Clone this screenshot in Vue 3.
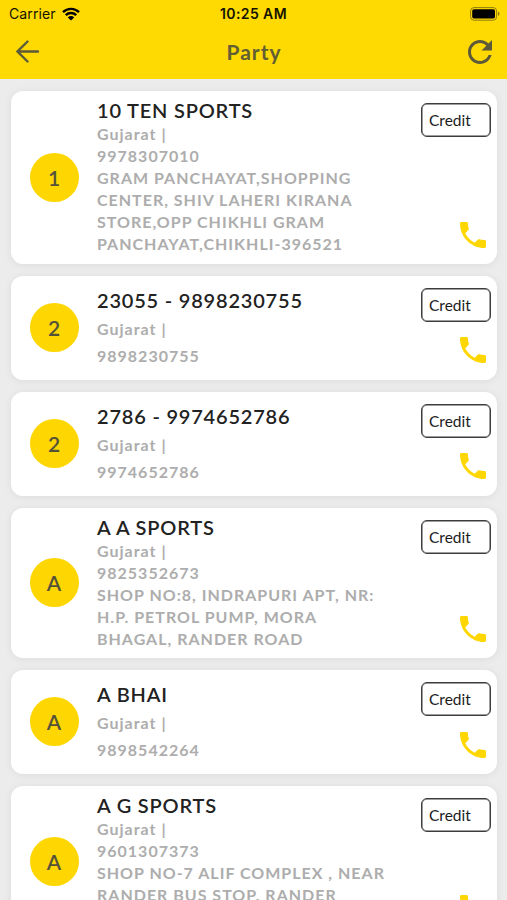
<template>
  <div class="screen">
    <header class="header">
      <div class="status-bar">
        <div class="carrier">
          <span>Carrier</span>
          <svg class="wifi" viewBox="0 0 18 14">
            <path d="M1 5.1a11.6 11.6 0 0 1 16 0" />
            <path d="M3.8 8.1a7.5 7.5 0 0 1 10.4 0" />
            <path class="wifi-dot" d="M9 13.6 5.8 10.4a4.6 4.6 0 0 1 6.4 0z" />
          </svg>
        </div>
        <div class="clock">10:25 AM</div>
        <svg class="battery" viewBox="0 0 30 14">
          <rect x="0.6" y="0.6" width="26" height="12.6" rx="3.4" fill="none" stroke="#8f7c10" stroke-width="1" />
          <rect x="2.2" y="2.2" width="22.8" height="9.4" rx="1.8" fill="#000" />
          <path d="M28 4.8c2 .7 2 3.5 0 4.2z" fill="#8f7c10" />
        </svg>
      </div>

      <div class="toolbar">
        <svg class="back" viewBox="0 0 24 24">
          <path d="M22 11.5H1.5M11.5 1.5l-10 10 10 10" />
        </svg>
        <h1>Party</h1>
        <svg class="refresh" viewBox="4 4 16 16">
          <path d="M17.65 6.35C16.2 4.9 14.21 4 12 4c-4.42 0-7.99 3.58-7.99 8s3.57 8 7.99 8c3.73 0 6.84-2.55 7.73-6h-2.08c-.82 2.33-3.04 4-5.65 4-3.31 0-6-2.69-6-6s2.69-6 6-6c1.66 0 3.14.69 4.22 1.78L13 11h7V4l-2.35 2.35z" />
        </svg>
      </div>
    </header>

    <main class="party-list">
      <article
        v-for="party in parties"
        :key="party.phone"
        class="card"
        :class="{ 'card-short': !party.address }"
      >
        <div class="avatar">{{ party.name.charAt(0) }}</div>

        <div class="info">
          <h2>{{ party.name }}</h2>
          <p>{{ party.state }} |</p>
          <p>{{ party.phone }}</p>
          <p v-for="line in party.address" :key="line">{{ line }}</p>
        </div>

        <div class="actions">
          <button class="credit">Credit</button>
          <svg class="call" viewBox="3 3 18 18">
            <path d="M6.62 10.79c1.44 2.83 3.76 5.14 6.59 6.59l2.2-2.2c.27-.27.67-.36 1.02-.24 1.12.37 2.33.57 3.57.57.55 0 1 .45 1 1V20c0 .55-.45 1-1 1-9.39 0-17-7.61-17-17 0-.55.45-1 1-1h3.5c.55 0 1 .45 1 1 0 1.25.2 2.45.57 3.57.11.35.03.74-.25 1.02l-2.2 2.2z" />
          </svg>
        </div>
      </article>
    </main>
  </div>
</template>

<script setup>
const parties = [
  {
    name: '10 TEN SPORTS',
    state: 'Gujarat',
    phone: '9978307010',
    address: [
      'GRAM PANCHAYAT,SHOPPING',
      'CENTER, SHIV LAHERI KIRANA',
      'STORE,OPP CHIKHLI GRAM',
      'PANCHAYAT,CHIKHLI-396521'
    ]
  },
  { name: '23055 - 9898230755', state: 'Gujarat', phone: '9898230755' },
  { name: '2786 - 9974652786', state: 'Gujarat', phone: '9974652786' },
  {
    name: 'A A SPORTS',
    state: 'Gujarat',
    phone: '9825352673',
    address: [
      'SHOP NO:8, INDRAPURI APT, NR:',
      'H.P. PETROL PUMP, MORA',
      'BHAGAL, RANDER ROAD'
    ]
  },
  { name: 'A BHAI', state: 'Gujarat', phone: '9898542264' },
  {
    name: 'A G SPORTS',
    state: 'Gujarat',
    phone: '9601307373',
    address: ['SHOP NO-7 ALIF COMPLEX , NEAR', 'RANDER BUS STOP, RANDER', 'ROAD']
  }
]
</script>

<style>
body { margin: 0; overflow: hidden; }
</style>

<style scoped>
* { box-sizing: border-box; }
h1, h2, p { margin: 0; }
.screen { height: 900px; overflow: hidden; background: #ececec; font-family: Lato, sans-serif; }

/* Header */
.header { height: 79px; background: #fed902; }
.status-bar { display: grid; grid-template-columns: 1fr auto 1fr; align-items: center; height: 27px; padding: 0 7px 0 9px; font-family: Inter, sans-serif; color: #141200; }
.carrier { display: flex; align-items: center; gap: 6px; font-size: 14px; letter-spacing: 0.1px; }
.wifi { width: 18px; height: 14px; fill: none; stroke: #000; stroke-width: 2.4; }
.wifi .wifi-dot { fill: #000; stroke: none; }
.clock { margin-right: 2px; font-size: 14px; font-weight: 600; letter-spacing: 0.4px; }
.battery { width: 30px; height: 14px; justify-self: end; }
.toolbar { display: flex; align-items: center; justify-content: space-between; height: 50px; padding: 0 15px 0 16px; }
.toolbar h1 { margin-top: -1px; font-size: 21px; font-weight: 700; letter-spacing: 1px; color: #625e34; }
.back { width: 24px; height: 24px; fill: none; stroke: #5c5a38; stroke-width: 2.4; stroke-linecap: round; }
.refresh { width: 24px; height: 24px; fill: #5c5a38; }

/* Cards */
.party-list { display: flex; flex-direction: column; gap: 12px; padding: 12px 10px 0 11px; }
.card { display: flex; flex-shrink: 0; padding: 6px 6px 8.5px 18.5px; border-radius: 12px; background: #fff; box-shadow: 0 1px 8px rgba(0, 0, 0, 0.07); }
.avatar { display: flex; align-items: center; justify-content: center; align-self: center; width: 49px; height: 49px; margin-top: 2px; border-radius: 50%; background: #fed602; font-size: 21px; font-weight: 600; color: #55523a; }
.info { flex: 1; margin-left: 18.5px; white-space: nowrap; }
.info h2 { font-size: 20px; font-weight: 600; line-height: 26px; letter-spacing: 0.8px; color: #222; }
.info p { font-size: 16px; font-weight: 700; line-height: 22px; letter-spacing: 1px; color: #adadad; }
.card-short { height: 104px; padding-top: 11px; }
.card-short .avatar { margin-top: -3px; }
.card-short h2 { margin-bottom: 2px; }
.card-short p { line-height: 27px; }

.actions { display: flex; flex-direction: column; justify-content: space-between; align-items: flex-end; padding: 6px 0 7.5px; }
.card-short .actions { padding: 1px 0 8px; }
.credit { width: 70px; height: 34px; padding: 0 0 0 7px; border: 1px solid #3c3c3c; border-radius: 6px; background: #fff; box-shadow: inset 0 0 0 0.5px #3c3c3c; font: 400 15.5px Lato, sans-serif; text-align: left; color: #1c1c1c; }
.call { width: 26px; height: 26px; margin-right: 5px; fill: #fed602; }
</style>
